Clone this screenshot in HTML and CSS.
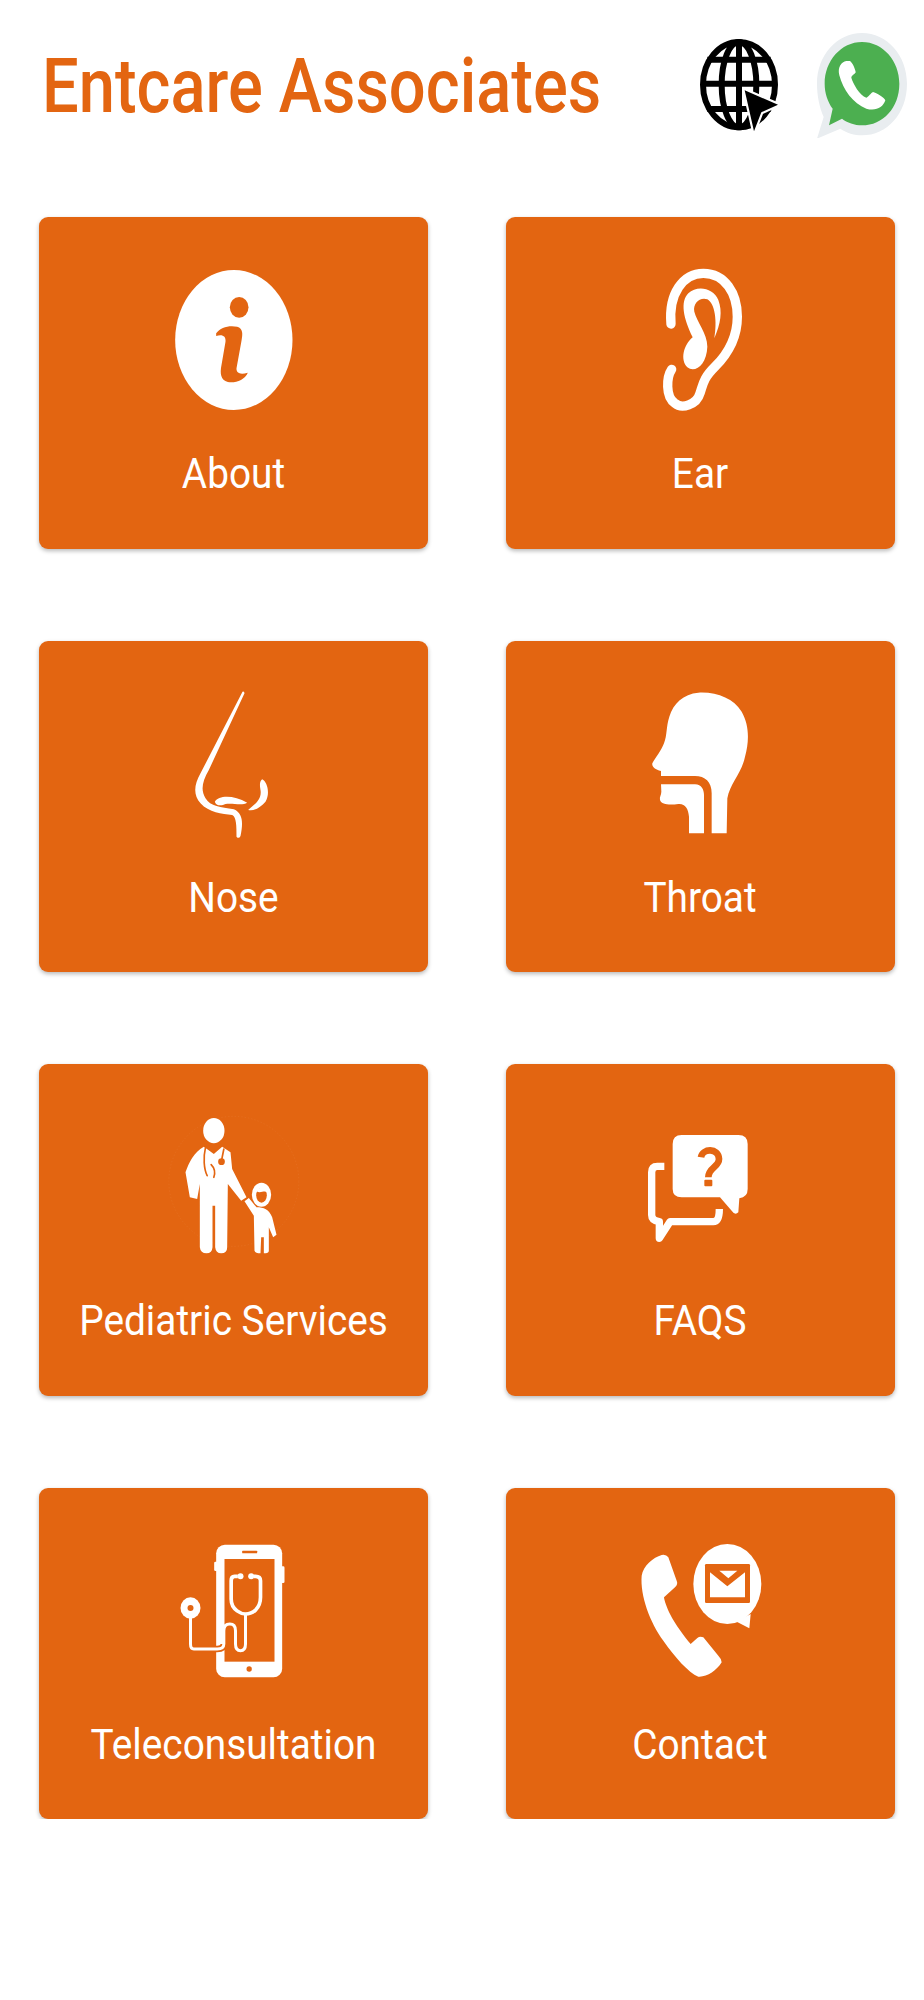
FILE: index.html
```html
<!DOCTYPE html>
<html lang="en">
<head>
<meta charset="utf-8">
<title>Entcare Associates</title>
<link rel="stylesheet" href="styles.css">
</head>
<body>
<header class="header">
  <h1 class="title">Entcare Associates</h1>
  <div class="links">
    <svg class="globe" viewBox="88 58 234 279" preserveAspectRatio="none" aria-label="Website">
      <ellipse class="gl" cx="205" cy="195" rx="108" ry="128"/>
      <ellipse class="gl" cx="205" cy="195" rx="52" ry="128"/>
      <path class="gl" d="M205 65V325M110 120H300M97 192H313M110 268H300"/>
      <path class="cursor" d="M222 212L322 255L272 278L250 335Z"/>
    </svg>
    <svg class="whatsapp" viewBox="442 38 270 315" preserveAspectRatio="none" aria-label="WhatsApp">
      <path class="wa-outer" d="M577 38C652 38 712 105 712 190C712 280 652 345 577 345C555 345 530 338 512 325L442 355L462 290C449 260 442 225 442 190C442 105 502 38 577 38Z"/>
      <path class="wa-green" d="M577 65C640 65 689 122 689 190C689 262 640 315 577 315C555 315 532 307 517 295L478 315L489 265C474 245 465 218 465 190C465 122 514 65 577 65Z"/>
      <path class="w" d="M530 122C515 125 503 140 509 165C520 208 550 250 590 265C618 273 640 262 647 240C645 232 620 218 610 215C604 217 597 230 590 232C570 225 550 190 545 172C545 165 558 160 558 155C556 145 548 125 540 122Z"/>
    </svg>
  </div>
</header>
<main class="grid">
  <a class="card">
    <svg class="icon" viewBox="0 0 540 510">
      <g transform="translate(-370.5 -111)">
        <ellipse class="w" cx="640" cy="390" rx="176" ry="210"/>
        <ellipse class="o" cx="656" cy="292" rx="28" ry="31"/>
        <path class="o" d="M587 370C600 352 625 345 650 350C668 355 667 372 663 392L648 475C647 490 660 495 682 488C672 510 645 520 622 516C600 510 598 490 603 465L615 395C617 378 605 372 587 378Z"/>
      </g>
    </svg>
    <span class="label">About</span>
  </a>
  <a class="card">
    <svg class="icon" viewBox="0 0 540 510">
      <g transform="translate(-30 9)">
        <path class="line-w" d="M213 222C205 130 250 70 310 70C375 70 412 130 412 200C412 260 385 310 345 350C310 385 310 400 300 430C290 465 245 478 225 460C195 440 200 380 215 358"/>
        <path class="w" d="M343 265C362 220 368 185 355 150C340 112 290 105 265 130C240 155 250 205 278 262C250 285 240 330 262 352C285 370 320 345 322 290C322 250 290 215 283 185C278 160 300 140 322 148C345 160 352 215 343 265Z"/>
      </g>
    </svg>
    <span class="label">Ear</span>
  </a>
  <a class="card">
    <svg class="icon" viewBox="0 0 540 510">
      <g transform="translate(19.5 -3)">
        <path class="w" d="M276 65L150 310C130 345 128 375 150 400C175 428 215 432 245 435C258 440 258 470 258 500Q265 508 270 498C278 460 278 430 250 418C210 412 180 410 165 385C150 360 155 335 175 300L282 70Q281 62 276 65Z"/>
        <path class="w" d="M193 395C205 375 250 375 290 398C275 408 245 398 225 402C210 410 195 405 193 395Z"/>
        <path class="w" d="M335 328C350 335 360 370 345 395C330 412 310 425 293 420C310 405 335 390 330 360Q325 335 335 328Z"/>
      </g>
    </svg>
    <span class="label">Nose</span>
  </a>
  <a class="card">
    <svg class="icon" viewBox="0 0 540 510">
      <g transform="translate(30 -3)">
        <path class="w" d="M235 68C290 65 340 85 365 125C388 165 388 215 375 260C365 310 330 340 322 385L320 490L275 490L275 370C275 335 255 318 225 318L123 318L123 303C105 298 95 290 97 280C105 265 125 240 132 220C142 195 138 170 148 140C160 100 190 72 235 68Z"/>
        <path class="w" d="M123 343L225 343C245 343 252 360 252 375L252 490L207 490L207 440C205 415 195 400 175 402C150 405 125 405 120 390C118 380 124 375 124 365Z"/>
      </g>
    </svg>
    <span class="label">Throat</span>
  </a>
  <a class="card">
    <svg class="icon" viewBox="0 0 540 510">
      <g transform="translate(19.5 0)">
        <circle class="ring" cx="250" cy="262" r="195"/>
        <ellipse class="w" cx="190" cy="110" rx="32" ry="38"/>
        <path class="w" d="M160 158C130 175 115 205 105 235L118 310L140 315L148 270L148 460Q150 478 168 478Q185 478 186 460L186 335L194 335L194 460Q196 478 212 478Q230 478 230 460L232 270L272 320L288 310L245 225L240 175L215 158L190 180Z"/>
        <path class="line-o" d="M165 160C158 190 160 225 170 245M190 250C195 235 190 220 182 212M220 165L214 195"/>
        <circle class="o" cx="213" cy="203" r="10"/>
        <ellipse class="w" cx="333" cy="302" rx="29" ry="36"/>
        <ellipse class="o" cx="333" cy="304" rx="16" ry="22"/>
        <path class="w" d="M318 292C325 275 350 278 350 295C340 288 330 300 318 292Z"/>
        <path class="w" d="M282 322L310 365L312 470Q315 478 330 478L332 430L340 430L340 478Q355 478 355 470L355 400L368 430L378 422L365 370C355 345 340 340 318 340L295 312Z"/>
      </g>
    </svg>
    <span class="label">Pediatric Services</span>
  </a>
  <a class="card">
    <svg class="icon" viewBox="0 0 540 510">
      <g transform="translate(30 45)">
        <path class="line-w-thin" d="M133 172H112Q95 172 95 190V318Q95 335 118 338V388L150 338H280Q298 338 298 300"/>
        <path class="w" d="M185 78H355Q383 78 383 105V240Q383 265 358 268L355 310Q345 320 335 305L300 265H185Q158 265 158 240V105Q158 78 185 78Z"/>
        <path class="line-q" d="M243 145C247 118 295 115 297 150C297 175 265 175 265 205"/>
        <rect class="o" x="253" y="212" width="24" height="20" rx="3"/>
      </g>
    </svg>
    <span class="label">FAQS</span>
  </a>
  <a class="card">
    <svg class="icon" viewBox="0 0 540 510">
      <g transform="translate(49.5 33)">
        <rect class="w" x="161" y="98" width="12" height="28" rx="4"/>
        <rect class="w" x="360" y="112" width="12" height="50" rx="4"/>
        <rect class="w" x="167" y="47" width="198" height="398" rx="26"/>
        <rect class="o" x="192" y="90" width="150" height="308"/>
        <rect class="o" x="245" y="65" width="45" height="8" rx="2"/>
        <circle class="o" cx="266" cy="420" r="8"/>
        <path class="halo" d="M190 345Q190 360 170 360H100"/>
        <path class="line-s" d="M232 142H222Q212 142 212 155V210C212 245 245 255 255 255C275 255 300 240 300 205V155Q300 142 285 142H280"/>
        <path class="line-t" d="M255 255V345Q255 365 240 365Q225 365 225 345V305Q225 285 208 285Q190 285 190 305V345Q190 360 170 360H100Q90 360 90 345V265"/>
        <circle class="w" cx="240" cy="142" r="9"/>
        <circle class="w" cx="272" cy="142" r="9"/>
        <ellipse class="w" cx="90" cy="237" rx="30" ry="32"/>
        <circle class="o" cx="90" cy="237" r="9"/>
      </g>
    </svg>
    <span class="label">Teleconsultation</span>
  </a>
  <a class="card">
    <svg class="icon" viewBox="0 0 540 510">
      <g transform="translate(30 33)">
        <path class="w" d="M125 78C100 85 70 110 65 140C60 200 90 280 130 335C165 385 205 430 235 443C260 445 290 425 305 400Q305 390 295 380L250 325Q240 320 232 327L212 345C195 325 165 285 150 255C140 235 133 215 132 205L165 175Q175 165 170 155L145 85Q138 75 125 78Z"/>
        <ellipse class="w" cx="322" cy="165" rx="102" ry="120"/>
        <path class="w" d="M350 278L388 298L392 255Z"/>
        <rect class="o" x="255" y="105" width="135" height="117" rx="4"/>
        <path class="w" d="M270 130L322 172L375 130V205H270Z"/>
        <path class="w" d="M298 125H352L325 148Z"/>
      </g>
    </svg>
    <span class="label">Contact</span>
  </a>
</main>
</body>
</html>
```
FILE: styles.css
```css
* { box-sizing: border-box; }
html, body { margin: 0; background: #fff; }
body { font-family: Roboto, "Liberation Sans", sans-serif; }

.header {
  display: flex;
  align-items: center;
  height: 171px;
  padding: 0 17px 0 42px;
  margin-bottom: 46px;
}
.title {
  margin: 0;
  font-size: 65px;
  font-weight: 500;
  line-height: 72px;
  color: #e36511;
  transform: scaleY(1.16);
  white-space: nowrap;
}
.links { display: flex; align-items: center; gap: 39px; margin-left: auto; }
.globe { width: 78px; height: 93px; display: block; }
.whatsapp { width: 90px; height: 105px; display: block; }
.gl { fill: none; stroke: #000; stroke-width: 18; }
.cursor { fill: #000; stroke: #fff; stroke-width: 13; paint-order: stroke; stroke-linejoin: round; }
.wa-outer { fill: #e9edf0; }
.wa-green { fill: #4caf50; }

.grid {
  display: grid;
  grid-template-columns: 389px 389px;
  column-gap: 77.5px;
  row-gap: 92px;
  padding-left: 39px;
}
.card {
  height: 331.5px;
  padding-top: 30px;
  display: flex;
  flex-direction: column;
  align-items: center;
  background: #e36511;
  border-radius: 9px;
  box-shadow: 0 2px 4px rgba(0, 0, 0, 0.28);
}
.icon { width: 180px; height: 170px; display: block; flex: none; }
.label {
  margin-top: 35px;
  font-size: 38.8px;
  line-height: 44px;
  color: #fff;
  transform: scaleY(1.11);
  white-space: nowrap;
}
.w { fill: #fff; }
.o { fill: #e36511; }
.line-w { fill: none; stroke: #fff; stroke-width: 28; stroke-linecap: round; }
.line-w-thin { fill: none; stroke: #fff; stroke-width: 22; stroke-linejoin: round; }
.line-o { fill: none; stroke: #e36511; stroke-width: 5; stroke-linecap: round; }
.line-q { fill: none; stroke: #e36511; stroke-width: 20; }
.line-s { fill: none; stroke: #fff; stroke-width: 11; }
.line-t { fill: none; stroke: #fff; stroke-width: 9; }
.halo { fill: none; stroke: #e36511; stroke-width: 20; }
.ring { fill: none; stroke: rgba(255, 255, 255, 0.08); stroke-width: 2; stroke-dasharray: 4 6; }
```
